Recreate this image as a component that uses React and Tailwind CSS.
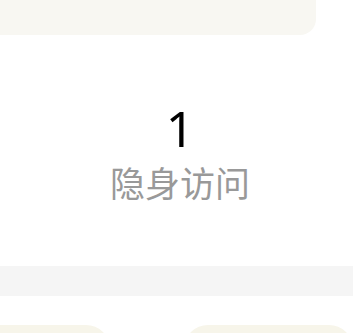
export default function App() {
  return (
    <div className="w-[353px] h-[333px] overflow-hidden bg-white" style={{ fontFamily: '"Noto Sans", "Noto Sans CJK SC", sans-serif' }}>
      <div className="w-[316px] h-[35px] bg-[#f8f7f2] rounded-br-[16px]" />
      <div className="h-[231px] flex flex-col items-center pl-[7px]">
        <div className="mt-[59px] text-[50px] leading-[68px] text-black">1</div>
        <div className="mt-[-2px] text-[35px] leading-[44px] text-[#999999]" style={{ fontFamily: '"Noto Sans CJK SC", sans-serif' }}>隐身访问</div>
      </div>
      <div className="h-[30px] bg-[#f5f5f5]" />
      <div className="mt-[29px] flex gap-[74px] ml-[-60px]">
        <div className="w-[188px] h-[40px] bg-[#f7f5ea] rounded-t-[24px]" />
        <div className="w-[188px] h-[40px] bg-[#f7f5ea] rounded-t-[24px]" />
      </div>
    </div>
  );
}
